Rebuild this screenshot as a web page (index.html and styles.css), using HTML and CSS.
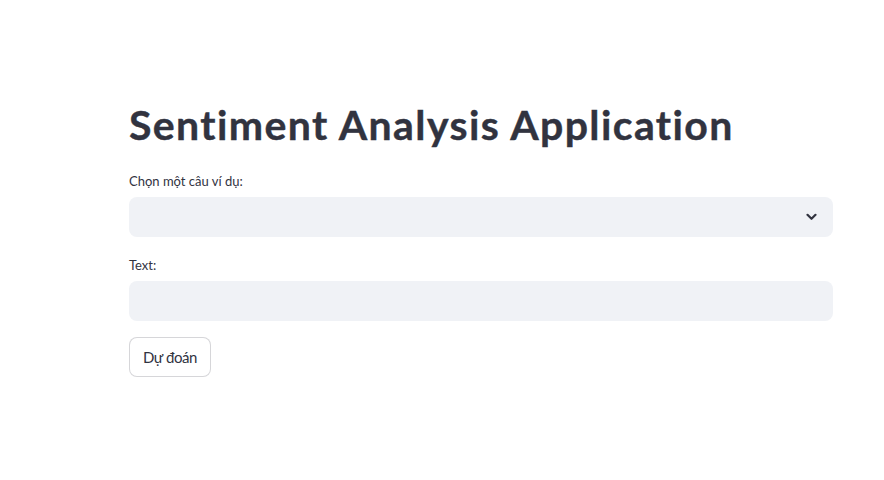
FILE: index.html
```html
<!DOCTYPE html>
<html lang="vi">
<head>
<meta charset="utf-8">
<title>Sentiment Analysis Application</title>
<link rel="stylesheet" href="styles.css">
</head>
<body>
<main class="app">
  <h1 class="title">Sentiment Analysis Application</h1>
  <label class="field-label">Chọn một câu ví dụ:</label>
  <div class="select">
    <svg class="chevron" width="11" height="8" viewBox="0 0 11 8" aria-hidden="true">
      <path d="M1.5 1.8 L5.5 5.8 L9.5 1.8" fill="none" stroke="#31333F" stroke-width="2.2" stroke-linecap="round" stroke-linejoin="round"/>
    </svg>
  </div>
  <label class="field-label field-label--second">Text:</label>
  <input class="text-input" type="text" aria-label="Text">
  <div class="actions">
    <button class="btn" type="button">Dự đoán</button>
  </div>
</main>
</body>
</html>
```
FILE: styles.css
```css
html, body {
  margin: 0;
  padding: 0;
  background: #ffffff;
}

body {
  font-family: "Lato", "Noto Sans", sans-serif;
  color: #31333F;
}

.app {
  width: 704px;
  padding: 100px 0 0 129px;
  display: flex;
  flex-direction: column;
}

.title {
  margin: 0;
  font-size: 41px;
  font-weight: 700;
  line-height: 1.2;
  letter-spacing: 1.4px;
  color: #31333F;
  -webkit-text-stroke: 0.4px #31333F;
}

.field-label {
  margin-top: 23px;
  font-size: 13px;
  line-height: 18px;
  height: 18px;
  color: #31333F;
}

.field-label--second {
  margin-top: 19px;
}

.select {
  margin-top: 7px;
  height: 40px;
  border-radius: 8px;
  background: #F0F2F6;
  display: flex;
  align-items: center;
  justify-content: flex-end;
  padding-right: 16px;
}

.chevron {
  display: block;
}

.text-input {
  margin: 7px 0 0 0;
  height: 40px;
  box-sizing: border-box;
  border: none;
  border-radius: 8px;
  background: #F0F2F6;
  padding: 0 12px;
  font: inherit;
  outline: none;
}

.actions {
  margin-top: 16px;
  display: flex;
}

.btn {
  width: 82px;
  height: 40px;
  box-sizing: border-box;
  border: 1px solid rgba(49, 51, 63, 0.2);
  border-radius: 8px;
  background: #ffffff;
  color: #31333F;
  font-family: "Lato", "Noto Sans", sans-serif;
  font-size: 15px;
  letter-spacing: -0.4px;
  padding: 0;
}
```
